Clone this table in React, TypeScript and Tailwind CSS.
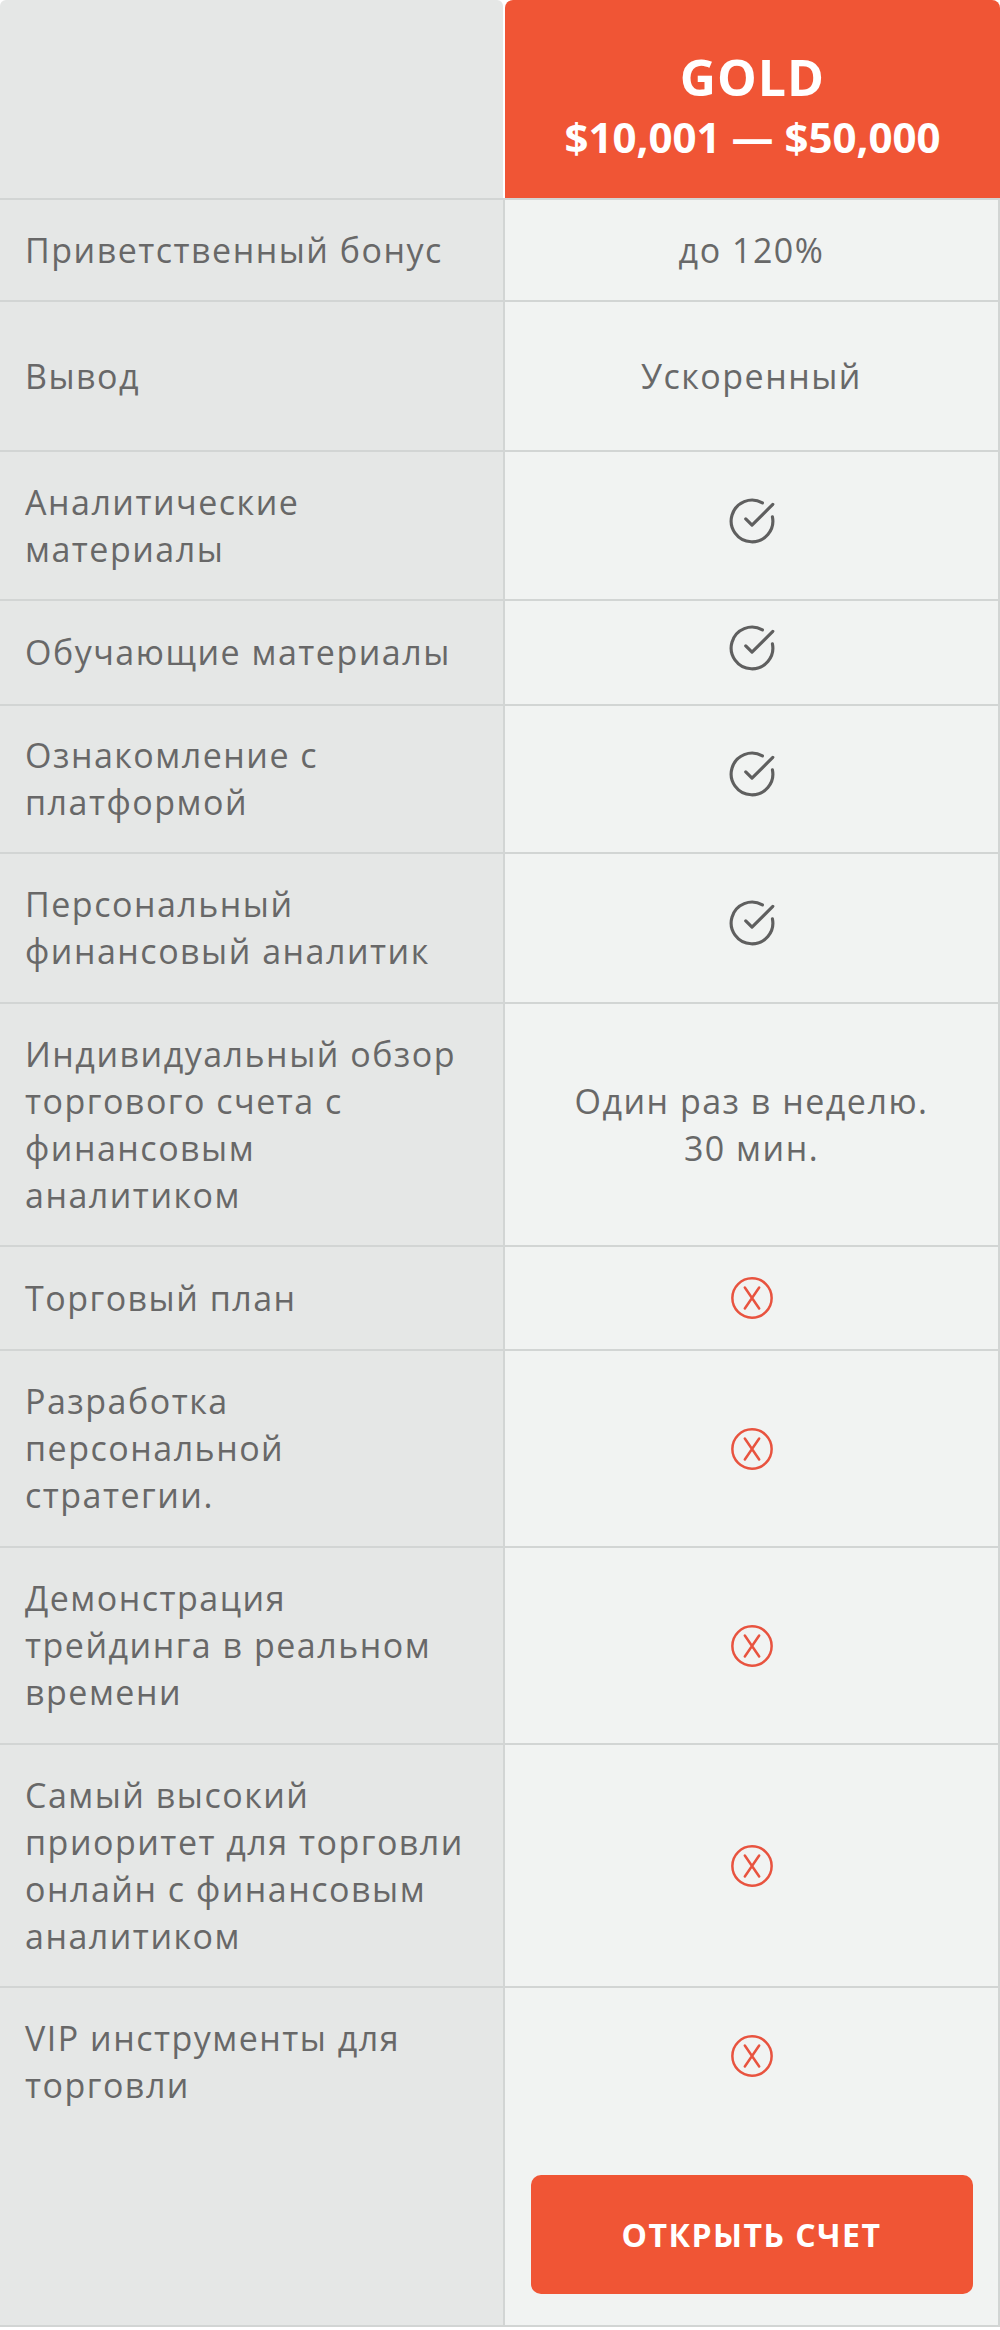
import { CircleCheckBig } from 'lucide-react';
import type { ReactNode } from 'react';

type Cell = 'yes' | 'no' | string[];

interface FeatureRow {
  label: string[];
  value: Cell;
  height: string;
}

const features: FeatureRow[] = [
  { label: ['Приветственный бонус'], value: ['до 120%'], height: 'h-[102px]' },
  { label: ['Вывод'], value: ['Ускоренный'], height: 'h-[150px]' },
  { label: ['Аналитические', 'материалы'], value: 'yes', height: 'h-[149px]' },
  { label: ['Обучающие материалы'], value: 'yes', height: 'h-[105px]' },
  { label: ['Ознакомление с', 'платформой'], value: 'yes', height: 'h-[148px]' },
  { label: ['Персональный', 'финансовый аналитик'], value: 'yes', height: 'h-[150px]' },
  {
    label: ['Индивидуальный обзор', 'торгового счета с', 'финансовым', 'аналитиком'],
    value: ['Один раз в неделю.', '30 мин.'],
    height: 'h-[243px]',
  },
  { label: ['Торговый план'], value: 'no', height: 'h-[104px]' },
  { label: ['Разработка', 'персональной', 'стратегии.'], value: 'no', height: 'h-[197px]' },
  { label: ['Демонстрация', 'трейдинга в реальном', 'времени'], value: 'no', height: 'h-[197px]' },
  {
    label: ['Самый высокий', 'приоритет для торговли', 'онлайн с финансовым', 'аналитиком'],
    value: 'no',
    height: 'h-[243px]',
  },
];

function Lines({ lines }: { lines: string[] }) {
  return (
    <>
      {lines.map((line, i) => (
        <span key={i} className="block whitespace-nowrap">
          {line}
        </span>
      ))}
    </>
  );
}

function CrossIcon() {
  return (
    <svg width="46" height="46" viewBox="0 0 48 48" fill="none" stroke="#e8533f" strokeWidth="2.6" strokeLinecap="round">
      <circle cx="24" cy="24" r="20.5" />
      <path d="M16.5 13 L31.5 35 M31.5 13 L16.5 35" />
    </svg>
  );
}

function ValueCell({ value }: { value: Cell }) {
  if (value === 'yes')
    return <CircleCheckBig size={50} strokeWidth={1.5} color="#5f5f5f" className="mb-[10px]" />;
  if (value === 'no') return <CrossIcon />;
  return (
    <div className="text-center">
      <Lines lines={value} />
    </div>
  );
}

function Row({ left, right, height }: { left: ReactNode; right: ReactNode; height: string }) {
  return (
    <div className={`flex border-b-2 border-[#d2d5d4] ${height}`}>
      <div className="flex w-[503px] shrink-0 items-center bg-[#e5e7e6] pl-[25px]">{left}</div>
      <div className="flex flex-1 items-center justify-center border-x-2 border-[#d2d5d4] bg-[#f1f3f2]">{right}</div>
    </div>
  );
}

export default function App() {
  return (
    <div
      className="h-[2330px] w-[1000px] bg-white text-[34px] leading-[47px] tracking-[1.5px] text-[#686868]"
      style={{ fontFamily: '"Open Sans", "Noto Sans", sans-serif' }}
    >
      <div className="flex h-[200px] border-b-2 border-[#d2d5d4]">
        <div className="w-[503px] shrink-0 rounded-t-md bg-[#e5e7e6]" />
        <div className="ml-[2px] flex-1 rounded-t-lg bg-[#f05535] pt-[50px] text-center font-bold tracking-normal text-white">
          <div className="text-[50px] leading-[54px] tracking-[1px]">GOLD</div>
          <div className="mt-[6px] text-[42px] leading-[54px]">$10,001 — $50,000</div>
        </div>
      </div>

      {features.map((row) => (
        <Row
          key={row.label.join(' ')}
          height={row.height}
          left={
            <div>
              <Lines lines={row.label} />
            </div>
          }
          right={<ValueCell value={row.value} />}
        />
      ))}

      <div className="flex h-[339px] border-b-2 border-[#d2d5d4]">
        <div className="w-[503px] shrink-0 bg-[#e5e7e6] pl-[25px] pt-[27px]">
          <Lines lines={['VIP инструменты для', 'торговли']} />
        </div>
        <div className="flex flex-1 flex-col items-center border-x-2 border-[#d2d5d4] bg-[#f1f3f2] pt-[21px]">
          <div className="flex h-[94px] items-center">
            <CrossIcon />
          </div>
          <button className="mt-auto mb-[31px] flex h-[119px] w-[442px] items-center justify-center rounded-[10px] bg-[#f05535] text-[32px] font-bold tracking-[1.5px] text-white">
            ОТКРЫТЬ СЧЕТ
          </button>
        </div>
      </div>
    </div>
  );
}
